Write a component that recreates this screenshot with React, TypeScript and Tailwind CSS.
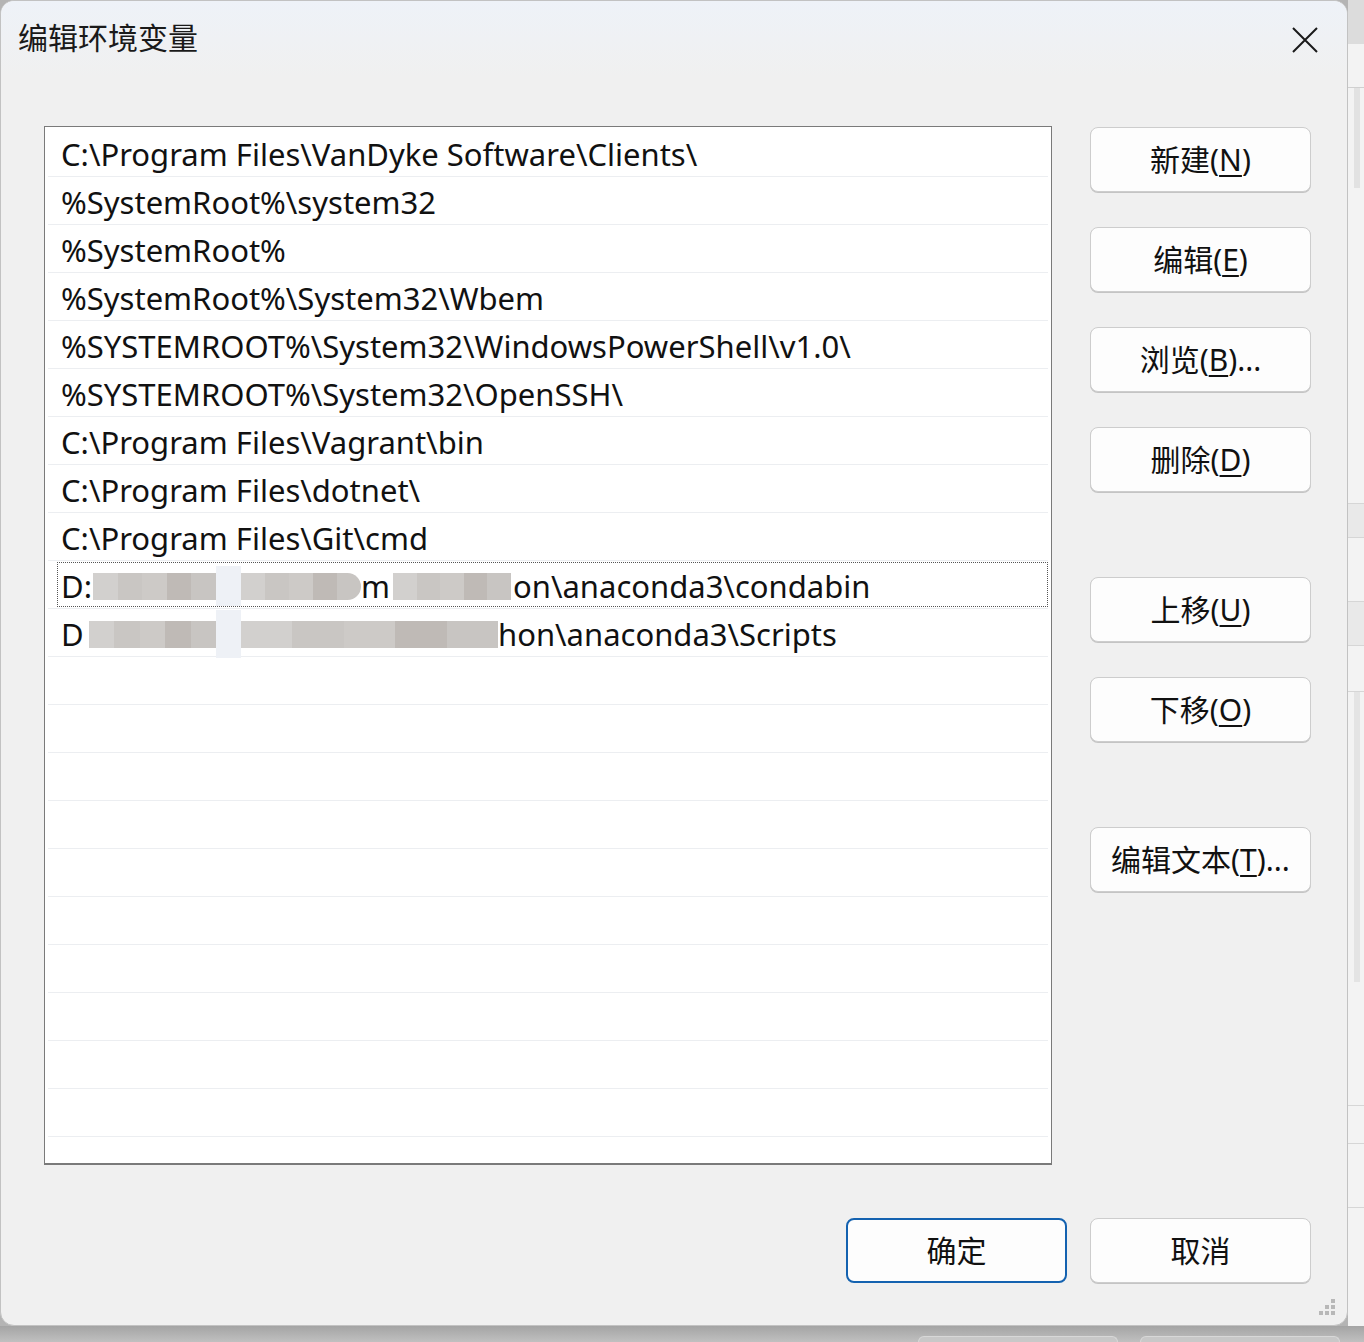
import React from "react";

const font = { fontFamily: '"Noto Sans", "Noto Sans CJK SC", sans-serif' };

const paths = [
  "C:\\Program Files\\VanDyke Software\\Clients\\",
  "%SystemRoot%\\system32",
  "%SystemRoot%",
  "%SystemRoot%\\System32\\Wbem",
  "%SYSTEMROOT%\\System32\\WindowsPowerShell\\v1.0\\",
  "%SYSTEMROOT%\\System32\\OpenSSH\\",
  "C:\\Program Files\\Vagrant\\bin",
  "C:\\Program Files\\dotnet\\",
  "C:\\Program Files\\Git\\cmd",
];

function Blur({ w, round }: { w: number; round?: boolean }) {
  return (
    <span
      className={`inline-flex h-[27px] overflow-hidden blur-[0.6px] ${round ? "rounded-r-[14px]" : ""}`}
      style={{ width: w }}
    >
      <span className="flex-1 bg-[#d2d0ce]" />
      <span className="flex-1 bg-[#c9c6c3]" />
      <span className="flex-1 bg-[#cdcac7]" />
      <span className="flex-1 bg-[#bfbab6]" />
      <span className="flex-1 bg-[#c8c5c2]" />
    </span>
  );
}

function Btn({ label, u, rest, primary }: { label: string; u?: string; rest?: string; primary?: boolean }) {
  return (
    <button
      className={`w-[221px] h-[65px] rounded-[8px] bg-[#fdfdfd] text-[30px] text-[#111] flex items-center justify-center ${
        primary ? "border-2 border-[#1462b0]" : "border border-[#cdcdcd] shadow-[0_1px_0_#c4c4c4]"
      }`}
    >
      {label}
      {u !== undefined && (
        <>
          (<span className="underline underline-offset-[4px] decoration-[2px]">{u}</span>){rest}
        </>
      )}
    </button>
  );
}

export default function App() {
  const empty = Array.from({ length: 10 });
  return (
    <div className="w-[1364px] h-[1342px] flex flex-col bg-[#b4b4b4] overflow-hidden" style={font}>
      <div className="flex h-[1326px]">
        <div className="w-[1348px] h-[1326px] rounded-[14px] border border-[#c2c2c2] bg-[#f0f0f0] flex flex-col overflow-hidden">
          {/* title bar */}
          <div className="h-[76px] bg-gradient-to-b from-[#eef2f8] to-[#f0f0f0] flex items-start justify-between">
            <div className="pl-[17px] pt-[17px] text-[30px] text-[#1a1a1a] leading-[40px]">编辑环境变量</div>
            <svg className="mt-[26px] mr-[29px]" width="26" height="26" viewBox="0 0 26 26">
              <path d="M1 1 L25 25 M25 1 L1 25" stroke="#1a1a1a" strokeWidth="2" fill="none" />
            </svg>
          </div>

          <div className="flex pl-[43px] pt-[49px]">
            {/* list box */}
            <div className="w-[1008px] h-[1039px] border border-[#7a7a7a] border-b-2 bg-white pt-[2px] px-[3px] overflow-hidden">
              {paths.map((p) => (
                <div key={p} className="h-[48px] border-b border-[#eceef1] flex items-center pl-[13px] pt-[3px] text-[31px] text-[#111]">
                  {p}
                </div>
              ))}
              <div className="h-[48px] border-b border-[#eceef1] relative flex items-center pl-[13px] pt-[3px] text-[31px] text-[#111]">
                <div className="absolute left-[9px] right-0 top-[1px] bottom-[1px] border border-dotted border-[#555]" />
                <span className="w-[32px]">D:</span>
                <Blur w={123} />
                <span className="w-[25px] h-[40px] bg-[#eef1f6]" />
                <Blur w={120} round />
                <span className="w-[32px] overflow-hidden">m</span>
                <Blur w={118} />
                <span className="pl-[2px]">on\anaconda3\condabin</span>
              </div>
              <div className="h-[48px] border-b border-[#eceef1] flex items-center pl-[13px] pt-[3px] text-[31px] text-[#111]">
                <span className="w-[28px]">D</span>
                <Blur w={127} />
                <span className="w-[25px] h-[48px] bg-[#eef1f6]" />
                <Blur w={257} />
                <span>hon\anaconda3\Scripts</span>
              </div>
              {empty.map((_, i) => (
                <div key={i} className="h-[48px] border-b border-[#eceef1]" />
              ))}
            </div>

            {/* side buttons */}
            <div className="ml-[38px] pt-[1px] flex flex-col">
              <div className="flex flex-col gap-[35px]">
                <Btn label="新建" u="N" />
                <Btn label="编辑" u="E" />
                <Btn label="浏览" u="B" rest="..." />
                <Btn label="删除" u="D" />
              </div>
              <div className="mt-[85px] flex flex-col gap-[35px]">
                <Btn label="上移" u="U" />
                <Btn label="下移" u="O" />
              </div>
              <div className="mt-[85px]">
                <Btn label="编辑文本" u="T" rest="..." />
              </div>
            </div>
          </div>

          {/* footer */}
          <div className="flex justify-end gap-[23px] pr-[36px] mt-[53px]">
            <Btn label="确定" primary />
            <Btn label="取消" />
          </div>
          <div className="flex-1 flex justify-end items-end pr-[12px] pb-[10px]">
            <div className="grid grid-cols-3 gap-[2px]">
              <span className="w-[4px] h-[4px]" />
              <span className="w-[4px] h-[4px]" />
              <span className="w-[4px] h-[4px] bg-[#b8b8b8]" />
              <span className="w-[4px] h-[4px]" />
              <span className="w-[4px] h-[4px] bg-[#b8b8b8]" />
              <span className="w-[4px] h-[4px] bg-[#b8b8b8]" />
              <span className="w-[4px] h-[4px] bg-[#b8b8b8]" />
              <span className="w-[4px] h-[4px] bg-[#b8b8b8]" />
              <span className="w-[4px] h-[4px] bg-[#b8b8b8]" />
            </div>
          </div>
        </div>

        {/* background window strip */}
        <div className="w-[16px] flex flex-col bg-[#f3f3f3]">
          <div className="h-[44px] bg-[#dcdcdc]" />
          <div className="h-[44px] border-b border-[#d0d0d0]" />
          <div className="h-[100px] ml-[6px] w-[6px] bg-[#e2e2e2]" />
          <div className="h-[316px] border-b border-[#d6d6d6]" />
          <div className="h-[34px] bg-[#e9e9e9] border-b border-[#d6d6d6]" />
          <div className="h-[64px] border-b border-[#d6d6d6]" />
          <div className="h-[44px] bg-[#e9e9e9] border-b border-[#d6d6d6]" />
          <div className="h-[46px] border-b border-[#d6d6d6]" />
          <div className="h-[290px] ml-[6px] w-[6px] bg-[#e4e4e4]" />
          <div className="h-[124px] border-b border-[#d6d6d6]" />
          <div className="h-[38px] border-b border-[#d6d6d6]" />
          <div className="h-[64px] border-b border-[#d6d6d6]" />
          <div className="flex-1" />
        </div>
      </div>
      <div className="h-[16px] bg-gradient-to-b from-[#a4a4a4] to-[#c0c0c0] flex items-end pl-[918px] gap-[22px]">
        <div className="w-[200px] h-[6px] rounded-t-[6px] border border-b-0 border-[#d8d8d8] bg-[#c8c8c8]" />
        <div className="w-[200px] h-[6px] rounded-t-[6px] border border-b-0 border-[#d8d8d8] bg-[#c8c8c8]" />
      </div>
    </div>
  );
}
